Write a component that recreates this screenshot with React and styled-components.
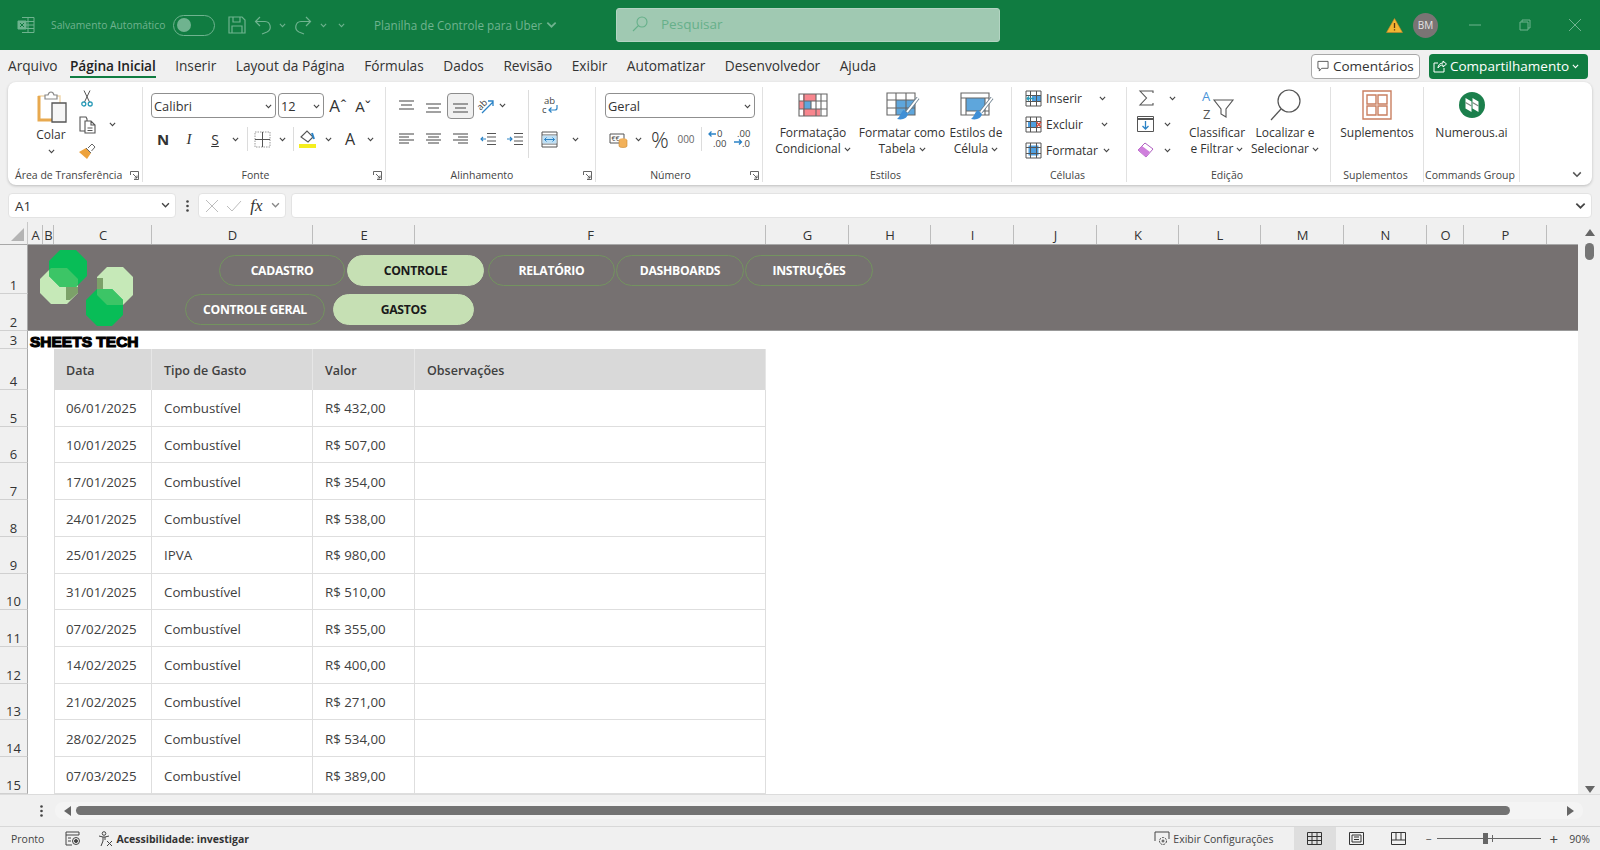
import React from 'react';
import styled, { createGlobalStyle } from 'styled-components';

const UI = '"Open Sans", "Noto Sans", sans-serif';

const Global = createGlobalStyle`
  html, body { margin: 0; padding: 0; height: 100%; overflow: hidden; background: #f0f0f0; }
  body { font-family: ${UI}; color: #333; }
  * { box-sizing: border-box; }
`;

const Page = styled.div`
  width: 1600px;
  height: 850px;
  display: flex;
  flex-direction: column;
  overflow: hidden;
  background: #f0f0f0;
`;

/* title bar */
const TitleBar = styled.header`
  height: 50px;
  flex: none;
  background: #107c41;
  display: flex;
  align-items: center;
  padding-left: 17px;
  color: #6fb38f;
`;
const AutoSave = styled.span`
  font-size: 10.3px;
  margin-left: 16px;
  width: 122px;
  white-space: nowrap;
`;
const Toggle = styled.span`
  width: 42px;
  height: 21px;
  border: 1.5px solid #6fb38f;
  border-radius: 11px;
  display: flex;
  align-items: center;
  padding-left: 3px;
  margin-right: 7px;
  &::before { content: ''; width: 14px; height: 14px; border-radius: 50%; background: #6fb38f; }
`;
const DocName = styled.span`
  font-size: 11.7px;
  margin-left: 22px;
  width: 172px;
  white-space: nowrap;
`;
const SearchBox = styled.div`
  width: 384px;
  height: 34px;
  margin-left: 59px;
  background: #a0c9b2;
  border: 1px solid #b3d4c2;
  border-radius: 3px;
  display: flex;
  align-items: center;
  gap: 13px;
  padding: 0 0 2px 15px;
  font-size: 13.5px;
  color: #66b08a;
`;
const TitleRight = styled.div`
  margin-left: auto;
  display: flex;
  align-items: center;
`;
const Avatar = styled.span`
  width: 25px;
  height: 25px;
  border-radius: 50%;
  background: #7a7474;
  color: #e4e4e4;
  font-size: 10px;
  display: flex;
  align-items: center;
  justify-content: center;
  margin: 0 12px 0 10px;
`;
const WinBtn = styled.span`
  width: 50px;
  display: flex;
  justify-content: center;
`;

/* tabs */
const TabRow = styled.nav`
  height: 32px;
  flex: none;
  display: flex;
  align-items: center;
  padding: 0 12px 0 8px;
  gap: 19.5px;
`;
const Tab = styled.span`
  font-size: 13.7px;
  height: 32px;
  line-height: 31px;
  white-space: nowrap;
  color: #333;
  position: relative;
  ${p => p.$active && `
    color: #222;
    font-weight: 600;
    letter-spacing: -0.1px;
    margin-left: -7px;
    &::after { content: ''; position: absolute; left: 0; right: 0; bottom: 4px; height: 2px; background: #107c41; }
  `}
`;
const TabActions = styled.div`
  margin-left: auto;
  display: flex;
  gap: 9px;
`;
const CommentBtn = styled.button`
  width: 109px;
  height: 25px;
  border: 1px solid #a8a8a8;
  border-radius: 4px;
  background: #fff;
  font: 13.5px ${UI};
  color: #333;
  display: flex;
  align-items: center;
  gap: 4px;
  padding: 0 0 0 5px;
`;
const ShareBtn = styled(CommentBtn)`
  width: 159px;
  border: 0;
  background: #107c41;
  color: #fff;
  white-space: nowrap;
  padding-left: 4px;
  gap: 3px;
`;

/* ribbon */
const Ribbon = styled.div`
  height: 103px;
  flex: none;
  margin: 0 8px;
  background: #fff;
  border-radius: 8px;
  box-shadow: 0 1px 3px rgba(0, 0, 0, 0.22);
  display: flex;
  padding: 5px 0 2px;
`;
const Group = styled.section`
  width: ${p => p.$w}px;
  flex: none;
  display: flex;
  flex-direction: column;
  border-right: 1px solid #e1e1e1;
  margin-bottom: 1px;
`;
const GroupBody = styled.div`
  flex: 1;
  display: flex;
  padding-left: ${p => p.$left || 0}px;
  min-height: 0;
`;
const GroupLabel = styled.div`
  height: 15px;
  display: grid;
  grid-template-columns: 1fr auto 1fr;
  align-items: center;
  font-size: 10.5px;
  line-height: 15px;
  color: #444;
  white-space: nowrap;
  padding: 1px 3px 0 0;
  & > span:first-child { grid-column: 2; margin-right: ${p => (p.$shift || 0) * 2}px; }
`;
const ClipLabel = styled(GroupLabel)`
  grid-template-columns: 1fr auto;
  padding-left: 7px;
  & > span:first-child { grid-column: 1; }
  & > span:last-child { grid-column: 2; }
`;
const Launcher = styled.span`
  grid-column: 3;
  justify-self: end;
  display: flex;
`;
const Stack = styled.div`
  display: flex;
  flex-direction: column;
  margin-top: ${p => p.$top || 0}px;
  gap: ${p => p.$gap || 0}px;
  width: ${p => (p.$w ? p.$w + 'px' : 'auto')};
  flex: none;
`;
const Row = styled.div`
  display: flex;
  align-items: center;
  height: ${p => p.$h || 26}px;
`;
const Slot = styled.span`
  width: ${p => p.$w}px;
  height: 100%;
  flex: none;
  display: flex;
  align-items: center;
  justify-content: center;
  color: ${p => p.$color || '#333'};
  font-size: ${p => p.$size || 13}px;
  font-weight: ${p => p.$weight || 400};
  font-style: ${p => (p.$italic ? 'italic' : 'normal')};
  font-family: ${p => (p.$serif ? '"Liberation Serif", serif' : 'inherit')};
  text-decoration: ${p => (p.$under ? 'underline' : 'none')};
`;
const ActiveSlot = styled(Slot)`
  height: 26px;
  background: #f0f0f0;
  border: 1px solid #8c8c8c;
  border-radius: 4px;
`;
const VRule = styled.span`
  width: 1px;
  height: ${p => p.$h}px;
  margin: ${p => p.$top || 0}px ${p => p.$gap || 0}px 0;
  background: #dcdcdc;
  flex: none;
`;
const Select = styled.div`
  width: ${p => p.$w}px;
  height: 25px;
  flex: none;
  background: #fff;
  border: 1px solid #8f8f8f;
  border-radius: 4px;
  display: flex;
  align-items: center;
  justify-content: space-between;
  padding: 1px 3px 0 2px;
  margin-right: 2px;
  font-size: 12.8px;
  color: #333;
`;
const BigBtn = styled.div`
  width: ${p => p.$w}px;
  flex: none;
  display: flex;
  flex-direction: column;
  align-items: center;
  padding-top: ${p => p.$top ?? 5}px;
  font-size: 12px;
  line-height: 16px;
  color: #333;
  white-space: nowrap;
`;
const BigIcon = styled.div`
  height: ${p => p.$h || 33}px;
  display: flex;
  align-items: flex-start;
`;
const CellAction = styled.span`
  display: flex;
  align-items: center;
  font-size: 12px;
  color: #333;
  width: 100%;
  padding-left: 13px;
  gap: 4px;
  & > svg:last-child { margin-left: auto; margin-right: ${p => p.$chev || 21}px; }
`;
const RibbonEnd = styled.div`
  flex: 1;
  display: flex;
  align-items: flex-end;
  justify-content: flex-end;
  padding: 0 10px 5px 0;
`;

/* formula bar */
const FormulaBar = styled.div`
  height: 25px;
  flex: none;
  margin: 8px 8px 0;
  display: flex;
  align-items: stretch;
`;
const Field = styled.div`
  background: #fff;
  border: 1px solid #e3e3e3;
  border-radius: 4px;
  display: flex;
  align-items: center;
  width: ${p => (p.$w ? p.$w + 'px' : 'auto')};
  flex: ${p => (p.$w ? 'none' : 1)};
  justify-content: space-between;
  padding: 0 5px 0 6px;
  margin-left: ${p => p.$gap || 0}px;
  font-size: 13.5px;
`;
const Dots = styled.span`
  width: 22px;
  display: flex;
  align-items: center;
  justify-content: center;
`;

/* sheet */
const SheetWrap = styled.div`
  height: 573px;
  flex: none;
  margin-top: 4px;
  display: flex;
  border-bottom: 1px solid #dcdcdc;
`;
const Sheet = styled.div`
  width: 1578px;
  flex: none;
  background: #fff;
  display: grid;
  grid-template-columns: 28px 15px 11px 98px 161px 102px 351px 83px 82px 83px 83px 82px 82px 83px 83px 37px 83px 1fr;
  grid-template-rows: 23px 49px 37px 18px 41px repeat(11, 36.73px);
  overflow: hidden;
`;
const Corner = styled.div`
  background: #f0f0f0;
  border-bottom: 1px solid #a8a8a8;
  border-right: 1px solid #c8c8c8;
  display: flex;
  align-items: flex-end;
  justify-content: flex-end;
  padding: 0 3px 3px 0;
`;
const ColHead = styled.div`
  background: #f0f0f0;
  border-bottom: 1px solid #a8a8a8;
  font-size: 13px;
  color: #333;
  display: flex;
  align-items: center;
  justify-content: center;
  padding-top: 3px;
  position: relative;
  &::after {
    content: '';
    position: absolute;
    right: 0;
    top: 3px;
    bottom: 0;
    width: 1px;
    background: ${p => (p.$end ? 'transparent' : '#bdbdbd')};
  }
`;
const RowHead = styled.div`
  background: #f0f0f0;
  grid-column: 1;
  border-right: 1px solid #a8a8a8;
  border-bottom: 1px solid #d0d0d0;
  font-size: 13px;
  color: #333;
  display: flex;
  align-items: flex-end;
  justify-content: center;
  line-height: 16px;
`;
const Banner = styled.div`
  grid-column: 2 / -1;
  grid-row: 2 / 4;
  background: #767171;
  display: flex;
  border-bottom: 1px solid #999;
  padding: 3px 0 0 10px;
`;
const PillArea = styled.div`
  display: flex;
  flex-direction: column;
  gap: 8px;
  padding-top: 7px;
  margin-left: 45px;
`;
const PillRow = styled.div`
  display: flex;
  gap: 1px;
  margin-left: ${p => p.$left || 0}px;
`;
const Pill = styled.div`
  width: ${p => p.$w}px;
  height: 31px;
  margin-right: ${p => p.$after || 0}px;
  border-radius: 16px;
  border: 1px solid ${p => (p.$active ? '#c6e0b4' : '#73935f')};
  background: ${p => (p.$active ? '#c6e0b4' : 'transparent')};
  color: ${p => (p.$active ? '#1a1a1a' : '#fff')};
  font-size: 12.2px;
  font-weight: 700;
  letter-spacing: -0.3px;
  display: flex;
  align-items: center;
  justify-content: center;
`;
const Brand = styled.div`
  grid-column: 2 / 8;
  grid-row: 4;
  padding-left: 2px;
  font-family: "Liberation Sans", sans-serif;
  font-size: 15.5px;
  line-height: 21px;
  font-weight: 700;
  color: #000;
  -webkit-text-stroke: 1.2px #000;
  white-space: nowrap;
`;
const Blank = styled.div`
  grid-column: 2 / 4;
`;
const Th = styled.div`
  background: #d9d9d9;
  border-right: 1px solid #e6e6e6;
  font-size: 12.5px;
  font-weight: 600;
  color: #404040;
  display: flex;
  align-items: center;
  padding: 1px 0 0 12px;
`;
const Td = styled.div`
  background: #fff;
  border-right: 1px solid #dedede;
  border-bottom: 1px solid #dedede;
  border-left: ${p => (p.$first ? '1px solid #dedede' : '0')};
  font-size: 13.3px;
  color: #404040;
  display: flex;
  align-items: center;
  padding: 1px 0 0 ${p => (p.$first ? 11 : 12)}px;
  white-space: nowrap;
`;
const VScroll = styled.div`
  flex: 1;
  display: flex;
  flex-direction: column;
  align-items: center;
  padding: 7px 0 1px 1px;
`;
const VThumb = styled.span`
  width: 9px;
  height: 17px;
  margin-top: 7px;
  background: #757575;
  border-radius: 5px;
`;

/* scroll row */
const HRow = styled.div`
  height: 32px;
  flex: none;
  display: flex;
  align-items: center;
  padding-left: 40px;
  border-bottom: 1px solid #d8d8d8;
`;
const HTrack = styled.div`
  margin-left: 12px;
  width: 1528px;
  height: 17px;
  border-radius: 8px;
  background: #f4f4f4;
  display: flex;
  align-items: center;
  padding: 0 9px;
  gap: 5px;
`;
const HThumb = styled.span`
  width: 1434px;
  height: 9px;
  border-radius: 5px;
  background: #737373;
`;

/* status bar */
const StatusBar = styled.footer`
  flex: 1;
  display: flex;
  align-items: center;
  font-size: 10.5px;
  color: #444;
  padding-left: 11px;
`;
const Strong = styled.strong`
  font-weight: 700;
  margin-left: 3px;
  color: #333;
`;
const StatusRight = styled.div`
  margin-left: auto;
  display: flex;
  align-items: center;
  height: 100%;
`;
const ViewBtn = styled.span`
  width: 42px;
  height: 100%;
  display: flex;
  align-items: center;
  justify-content: center;
  background: ${p => (p.$active ? '#dedede' : 'transparent')};
`;
const Zoom = styled.div`
  display: flex;
  align-items: center;
  margin-left: 6px;
  gap: 3px;
  width: 174.5px;
  font-size: 10.5px;
`;
const Slider = styled.span`
  width: 104px;
  height: 1px;
  background: #666;
  position: relative;
  margin: 0 6px 0 2px;
  &::before { content: ''; position: absolute; left: 46px; top: -5px; width: 5px; height: 11px; background: #666; }
  &::after { content: ''; position: absolute; left: 55px; top: -3px; width: 1px; height: 7px; background: #666; }
`;
const PlusSign = styled.span`
  font-size: 15px;
`;
const ZoomValue = styled.span`
  margin-left: auto;
  padding-right: 10px;
`;
const ConfigText = styled.span`
  margin: 0 20px 0 3px;
`;

const Ico = styled.svg`
  display: block;
  flex: none;
  overflow: visible;
  margin: ${p => p.$m || 0};
`;
const Flip = styled(Ico)`
  transform: scaleX(-1);
`;

const Chev = ({ c = '#444', w = 7 }) => (
  <Ico width={w} height={w * 0.7} viewBox="0 0 7 5" fill="none" stroke={c} strokeWidth="1.1"><path d="M.8 1l2.7 2.7L6.2 1" /></Ico>
);
const Launch = () => (
  <Ico width="9" height="9" viewBox="0 0 9 9" fill="none" stroke="#555" strokeWidth="0.9"><path d="M.5 4V.5h8v8H4M3 3l4 4M7 4.5V7H4.5" /></Ico>
);
const Lines = ({ rows, w = 17, h = 14 }) => (
  <Ico width={w} height={h} viewBox={`0 0 ${w} ${h}`} stroke="#555" strokeWidth="1.1">
    {rows.map((r, i) => <line key={i} x1={r[0]} x2={r[1]} y1={r[2]} y2={r[2]} />)}
  </Ico>
);
const Indent = ({ dir }) => (
  <Ico width="16" height="14" viewBox="0 0 16 14" fill="none" strokeWidth="1.1">
    <path d="M7 1.5h9M7 5h9M7 9h9M7 12.5h9" stroke="#555" />
    <path d={dir ? 'M0 7h5M3 5l2 2-2 2' : 'M6 7H1M3 5L1 7l2 2'} stroke="#2b83c6" />
  </Ico>
);
const DecIcon = ({ rev }) => (
  <Ico width="17" height="20" viewBox="0 0 17 20">
    <text x={rev ? 3 : 9} y="8" fontSize="9.5" fill="#444" fontFamily="Open Sans">{rev ? '.00' : '0'}</text>
    <text x={rev ? 8 : 5} y="18" fontSize="9.5" fill="#444" fontFamily="Open Sans">{rev ? '.0' : '.00'}</text>
    <path d={rev ? 'M0 13h7M5 10.5L7.5 13 5 15.5' : 'M8 5H1M3.5 2.5L1 5l2.5 2.5'} fill="none" stroke="#2b83c6" strokeWidth="1.3" />
  </Ico>
);

const ExcelIcon = () => (
  <Ico width="18" height="18" viewBox="0 0 18 18" fill="none" stroke="#6fb38f" strokeWidth="1">
    <path d="M5 1.5h12v15H5M11 1.5v15M5 5.5h12M5 9h12M5 12.5h12" />
    <path d="M1 5h8v8H1z" fill="#6fb38f" />
    <path d="M3 7l4 4M7 7l-4 4" stroke="#107c41" />
  </Ico>
);
const SaveIcon = () => (
  <Ico width="18" height="18" viewBox="0 0 18 18" fill="none" stroke="#6fb38f" strokeWidth="1.2"><path d="M1 1h13l3 3v13H1zM5 1v5h7V1M4 17v-7h10v7" /></Ico>
);
const undoPath = 'M6 1L1.5 5.5 6 10M1.5 5.5H11a5.5 5.5 0 0 1 2 10.5L8 18';
const UndoIcon = () => (
  <Ico width="18" height="19" viewBox="0 0 18 19" fill="none" stroke="#6fb38f" strokeWidth="1.2"><path d={undoPath} /></Ico>
);
const RedoIcon = () => (
  <Flip width="18" height="19" viewBox="0 0 18 19" fill="none" stroke="#6fb38f" strokeWidth="1.2"><path d={undoPath} /></Flip>
);
const SearchIcon = ({ c = '#66b08a', s = 16 }) => (
  <Ico width={s} height={s} viewBox="0 0 16 16" fill="none" stroke={c} strokeWidth="1.1"><circle cx="10" cy="6" r="5" /><path d="M6.5 9.5L1 15" /></Ico>
);
const WarnIcon = () => (
  <Ico width="17" height="15" viewBox="0 0 17 15"><path d="M8.5.5l8 14H.5z" fill="#f2b632" stroke="#c9822a" strokeWidth=".6" /><path d="M8.5 5v5M8.5 11.2v1.3" stroke="#5a3510" strokeWidth="1.3" /></Ico>
);
const PasteIcon = () => (
  <Ico width="31" height="33" viewBox="0 0 31 33" fill="none" $m="0 0 0 3px">
    <path d="M2 6h21v24H2z" fill="#fff" stroke="#f0d7ae" strokeWidth="1.5" />
    <path d="M2 6v24h21" stroke="#e8a94f" strokeWidth="3" />
    <path d="M8 9V5h3c1-4 5-4 6 0h3v4z" fill="#fff" stroke="#8a8a8a" strokeWidth="1.2" />
    <path d="M15 13h14v19H15z" fill="#f6f6f6" stroke="#555" strokeWidth="1.3" />
  </Ico>
);
const CutIcon = () => (
  <Ico width="12" height="17" viewBox="0 0 12 17" fill="none" stroke="#555" strokeWidth="1"><path d="M3 .5l5.5 11.5M9 .5L3.5 12" /><circle cx="2.8" cy="14" r="2" stroke="#2b9bb8" strokeWidth="1.3" /><circle cx="9.2" cy="14" r="2" stroke="#2b9bb8" strokeWidth="1.3" /></Ico>
);
const CopyIcon = () => (
  <Ico width="17" height="18" viewBox="0 0 17 18" fill="none" stroke="#555" strokeWidth="1.1"><path d="M1 1h6l1 2v12H1z" /><path d="M6 5h6l4 4v8H6zM12 5v4h4M8.5 12h5M8.5 14.5h5" fill="#fff" /></Ico>
);
const BrushIcon = () => (
  <Ico width="17" height="16" viewBox="0 0 17 16" fill="none"><path d="M0 9l7-4 5 5-4 6z" fill="#eda23c" /><path d="M7 5l5 5M9 5l4-4 3 3-3.5 4" stroke="#666" strokeWidth="1" /></Ico>
);
const BorderIcon = () => (
  <Ico width="17" height="17" viewBox="0 0 17 17" fill="none" stroke="#9a9a9a" strokeWidth="1" strokeDasharray="1.5 1"><path d="M1 1h15v15H1z" /><path d="M8.5 1v15M1 8.5h15" stroke="#555" strokeDasharray="0" /></Ico>
);
const FillIcon = () => (
  <Ico width="18" height="20" viewBox="0 0 18 20" fill="none"><path d="M2 8l6-6 6 6-5 5z" stroke="#555" strokeWidth="1.1" /><path d="M13 4l2 6" stroke="#2b83c6" strokeWidth="2" /><rect x="0" y="15" width="17" height="4" fill="#f5ee1e" /></Ico>
);
const OrientIcon = () => (
  <Ico width="18" height="18" viewBox="0 0 18 18" fill="none"><text x="0" y="11" fontSize="9" fill="#444" fontFamily="Open Sans" transform="rotate(-45 5 8)">ab</text><path d="M5 16L16 5M11 4h5v5" stroke="#2b83c6" strokeWidth="1.3" /></Ico>
);
const WrapIcon = () => (
  <Ico width="16" height="19" viewBox="0 0 16 19" fill="none"><text x="2" y="8" fontSize="9.5" fill="#444" fontFamily="Open Sans">ab</text><text x="0" y="17" fontSize="9.5" fill="#444" fontFamily="Open Sans">c</text><path d="M15 9v3a2 2 0 0 1-2 2H7M9.5 11.5L7 14l2.5 2.5" stroke="#2b83c6" strokeWidth="1.2" /></Ico>
);
const MergeIcon = () => (
  <Ico width="17" height="17" viewBox="0 0 17 17" fill="none" stroke="#555" strokeWidth="1"><path d="M1 1h15v15H1zM1 4h15M1 13h15" /><rect x="1.5" y="4.5" width="14" height="8" fill="#bfe0f5" stroke="none" /><path d="M3.5 8.5h10M5.5 6.5l-2 2 2 2M11.5 6.5l2 2-2 2" stroke="#2b83c6" /></Ico>
);
const CurrencyIcon = () => (
  <Ico width="19" height="17" viewBox="0 0 19 17" fill="none"><path d="M1 3h14v9H1z" stroke="#555" /><text x="2.5" y="10" fontSize="7" fill="#444" fontFamily="Open Sans">€€</text><ellipse cx="14" cy="9" rx="4" ry="1.8" fill="#f2b15a" /><path d="M10 9v6c0 2 8 2 8 0V9" fill="#f2b15a" stroke="#c8862f" strokeWidth=".6" /></Ico>
);
const CondIcon = () => (
  <Ico width="30" height="24" viewBox="0 0 30 24" fill="none">
    <path d="M5 1h13v7H5zM5 16h17v7H5zM1 8h5v8H1z" fill="#f8868e" />
    <path d="M6 8h7v8H6z" fill="#5ea6dc" />
    <path d="M1 1h28v22H1zM6 1v22M13 8v8M18 1v22M23 1v22M1 8h28M1 16h28" stroke="#666" strokeWidth="1.1" />
  </Ico>
);
const BrushOver = () => (
  <>
    <path d="M32 6L21 20" stroke="#6a7d8c" strokeWidth="3.6" />
    <path d="M32 6L21 20" stroke="#fff" strokeWidth="2" />
    <path d="M18 18c-3 1-3 6-7 9 6 1.5 10-1 11-5z" fill="#3f8fd6" />
  </>
);
const TableStyleIcon = () => (
  <Ico width="32" height="29" viewBox="0 0 32 29" fill="none">
    <path d="M10 8h19v15H10z" fill="#5ea6dc" />
    <path d="M1 1h28v22H1zM10 1v22M20 1v22M1 8h28M1 16h28" stroke="#666" strokeWidth="1.1" />
    <BrushOver />
  </Ico>
);
const CellStyleIcon = () => (
  <Ico width="32" height="29" viewBox="0 0 32 29" fill="none">
    <path d="M6 6h19v13H6z" fill="#5ea6dc" />
    <path d="M1 1h28v22H1zM6 6v17M25 6v17M1 6h28M6 19h23" stroke="#666" strokeWidth="1.1" />
    <BrushOver />
  </Ico>
);
const CellIcon = ({ kind }) => (
  <Ico width="17" height="17" viewBox="0 0 17 17" fill="none" stroke="#555" strokeWidth="1">
    {kind === 'format' && <rect x="3.5" y="3.5" width="10" height="10" fill="#4f9fe0" stroke="none" />}
    {kind === 'insert' && <rect x="7" y="5" width="9" height="7" fill="#4f9fe0" stroke="none" />}
    {kind === 'delete' && <rect x="3" y="6" width="8" height="6" fill="#4f9fe0" stroke="none" />}
    <path d="M1 1h15v15H1zM1 5.5h15M1 11.5h15M5.5 1v15M11.5 1v15" />
    {kind === 'insert' && <path d="M9 8.5H2M4 6.5l-2 2 2 2" stroke="#2b9bb8" strokeWidth="1.3" />}
    {kind === 'delete' && <path d="M11.5 6l4.5 5M16 6l-4.5 5" stroke="#d34a3c" strokeWidth="1.3" />}
  </Ico>
);
const SigmaIcon = () => (
  <Ico width="15" height="16" viewBox="0 0 15 16" fill="none" stroke="#555" strokeWidth="1.1"><path d="M14 3V1H1l6.5 7L1 15h13v-2" /></Ico>
);
const FillDownIcon = () => (
  <Ico width="17" height="16" viewBox="0 0 17 16" fill="none"><path d="M.5.5h16v15H.5z" stroke="#555" /><path d="M.5 3h16" stroke="#555" strokeWidth="2" /><path d="M8.5 5v8M5.5 10l3 3 3-3" stroke="#2b83c6" strokeWidth="1.3" /></Ico>
);
const EraserIcon = () => (
  <Ico width="17" height="16" viewBox="0 0 17 16"><path d="M1 8l7-7 8 6-7 8z" fill="#fff" stroke="#b060c0" /><path d="M1 8l4-4 8 6-4 5z" fill="#cf7fdc" /></Ico>
);
const SortIcon = () => (
  <Ico width="33" height="30" viewBox="0 0 33 30" fill="none">
    <text x="1" y="12" fontSize="13" fill="#4a94d8" fontFamily="Open Sans">A</text>
    <text x="2" y="30" fontSize="13" fill="#555" fontFamily="Open Sans">Z</text>
    <path d="M13 11h19l-7 9v8l-5-3v-5z" stroke="#555" strokeWidth="1.1" />
  </Ico>
);
const BigSearch = () => (
  <Ico width="31" height="32" viewBox="0 0 31 32" fill="none" stroke="#555" strokeWidth="1.2"><circle cx="19" cy="12" r="11" /><path d="M11 20L1 31" /></Ico>
);
const AddinIcon = () => (
  <Ico width="30" height="30" viewBox="0 0 30 30" fill="none" stroke="#c97f60" strokeWidth="1.4"><path d="M1 1h28v28H1z" /><path d="M5 5h9v9H5zM16 5h9v9h-9zM5 16h9v9H5zM16 16h9v9h-9z" /></Ico>
);
const NumerousIcon = () => (
  <Ico width="26" height="26" viewBox="0 0 26 26">
    <circle cx="13" cy="13" r="13" fill="#1b7f4c" />
    <path d="M6.5 6l6 3.5V20l-6-3.5zM13.5 6l6 3.5V20l-6-3.5z" fill="#fff" />
    <path d="M6.5 10.5l6 3.5M13.5 10.5l6 3.5" stroke="#7b8a80" strokeWidth="1.2" />
  </Ico>
);
const CommentIcon = () => (
  <Ico width="12" height="12" viewBox="0 0 13 13" fill="none" stroke="#555"><path d="M1 1.5h11V9H5L2.5 12V9H1z" /></Ico>
);
const ShareIcon = () => (
  <Ico width="14" height="13" viewBox="0 0 14 13" fill="none" stroke="#fff"><path d="M5 3H1v9h10V8M5 8c0-3 2-5 5-5V1l3.5 3L10 7V5C8 5 6 6 5 8z" /></Ico>
);
const KebabIcon = () => (
  <Ico width="3" height="12" viewBox="0 0 3 12" fill="#444"><circle cx="1.5" cy="1.5" r="1.3" /><circle cx="1.5" cy="6" r="1.3" /><circle cx="1.5" cy="10.5" r="1.3" /></Ico>
);
const OctLogo = () => (
  <Ico width="102" height="80" viewBox="0 0 102 80">
    <polygon points="13,20 29,20 40,31 40,45 29,56 13,56 2,45 2,31" fill="#c6e9b8" />
    <polygon points="69,19 85,19 95,29 95,47 85,57 69,57 59,47 59,29" fill="#c6e9b8" />
    <polygon points="22,2 38,2 49,13 49,28 38,39 22,39 11,28 11,13" fill="#08bd57" />
    <polygon points="13,20 29,20 40,31 40,36 38,39 22,39 11,28 11,22" fill="#3cc566" />
    <polygon points="28,39 40,39 40,45 32,52 28,52" fill="#7ca169" />
    <polygon points="59,41 74,41 85,52 85,67 74,78 59,78 48,67 48,52" fill="#08bd57" />
    <polygon points="59,41 74,41 85,52 85,57 69,57 59,47" fill="#3cc566" />
    <polygon points="59,30 65,30 65,41 59,41" fill="#7ca169" />
  </Ico>
);

const navTop = [
  ['CADASTRO', 126, false, 1], ['CONTROLE', 137, true, 3], ['RELATÓRIO', 127, false, 0],
  ['DASHBOARDS', 128, false, 0], ['INSTRUÇÕES', 128, false, 0],
];
const navBottom = [['CONTROLE GERAL', 140, false, 7], ['GASTOS', 141, true, 0]];
const cols = ['A', 'B', 'C', 'D', 'E', 'F', 'G', 'H', 'I', 'J', 'K', 'L', 'M', 'N', 'O', 'P'];
const tabs = ['Arquivo', 'Página Inicial', 'Inserir', 'Layout da Página', 'Fórmulas', 'Dados', 'Revisão', 'Exibir', 'Automatizar', 'Desenvolvedor', 'Ajuda'];
const gastos = [
  ['06/01/2025', 'Combustível', 'R$ 432,00'],
  ['10/01/2025', 'Combustível', 'R$ 507,00'],
  ['17/01/2025', 'Combustível', 'R$ 354,00'],
  ['24/01/2025', 'Combustível', 'R$ 538,00'],
  ['25/01/2025', 'IPVA', 'R$ 980,00'],
  ['31/01/2025', 'Combustível', 'R$ 510,00'],
  ['07/02/2025', 'Combustível', 'R$ 355,00'],
  ['14/02/2025', 'Combustível', 'R$ 400,00'],
  ['21/02/2025', 'Combustível', 'R$ 271,00'],
  ['28/02/2025', 'Combustível', 'R$ 534,00'],
  ['07/03/2025', 'Combustível', 'R$ 389,00'],
];

const TitleArea = () => (
  <TitleBar>
    <ExcelIcon />
    <AutoSave>Salvamento Automático</AutoSave>
    <Toggle />
    <Slot $w={30}><SaveIcon /></Slot>
    <Slot $w={22}><UndoIcon /></Slot>
    <Slot $w={16}><Chev c="#6fb38f" /></Slot>
    <Slot $w={26}><RedoIcon /></Slot>
    <Slot $w={14}><Chev c="#6fb38f" /></Slot>
    <Slot $w={22}><Chev c="#6fb38f" /></Slot>
    <DocName>Planilha de Controle para Uber</DocName>
    <Chev c="#6fb38f" w={11} />
    <SearchBox><SearchIcon />Pesquisar</SearchBox>
    <TitleRight>
      <WarnIcon />
      <Avatar>BM</Avatar>
      <WinBtn><Ico width="12" height="2" viewBox="0 0 12 2"><path d="M0 1h12" stroke="#6fb38f" /></Ico></WinBtn>
      <WinBtn><Ico width="12" height="12" viewBox="0 0 12 12" fill="none" stroke="#6fb38f"><path d="M1 3h8v8H1zM3 3V1h8v8H9" /></Ico></WinBtn>
      <WinBtn><Ico width="12" height="12" viewBox="0 0 12 12" stroke="#6fb38f"><path d="M0 0l12 12M12 0L0 12" /></Ico></WinBtn>
    </TitleRight>
  </TitleBar>
);

const RibbonArea = () => (
  <Ribbon>
    <Group $w={135}>
      <GroupBody $left={16}>
        <BigBtn $w={54} $top={3}>
          <BigIcon $h={37}><PasteIcon /></BigIcon>
          <span>Colar</span>
          <Row $h={16}><Chev /></Row>
        </BigBtn>
        <Stack $w={50} $gap={1}>
          <Row $h={23}><Slot $w={18}><CutIcon /></Slot></Row>
          <Row $h={27}><Slot $w={18}><CopyIcon /></Slot><Slot $w={32}><Chev /></Slot></Row>
          <Row $h={24}><Slot $w={18}><BrushIcon /></Slot></Row>
        </Stack>
      </GroupBody>
      <ClipLabel>
        <span>Área de Transferência</span>
        <Launcher><Launch /></Launcher>
      </ClipLabel>
    </Group>

    <Group $w={243}>
      <GroupBody $left={8}>
        <Stack $top={6} $gap={8}>
          <Row $h={25}>
            <Select $w={125}>Calibri<Chev /></Select>
            <Select $w={46}>12<Chev /></Select>
            <Slot $w={24} $size={17}>Aˆ</Slot>
            <Slot $w={26} $size={15}>Aˇ</Slot>
          </Row>
          <Row>
            <Slot $w={24} $weight={700} $size={15}>N</Slot>
            <Slot $w={28} $italic $serif $size={15}>I</Slot>
            <Slot $w={24} $under $size={14}>S</Slot>
            <Slot $w={16}><Chev /></Slot>
            <VRule $h={24} $gap={4} />
            <Slot $w={21}><BorderIcon /></Slot>
            <Slot $w={18}><Chev /></Slot>
            <VRule $h={24} $gap={2} />
            <Slot $w={24}><FillIcon /></Slot>
            <Slot $w={16}><Chev /></Slot>
            <Slot $w={28} $size={16}>A</Slot>
            <Slot $w={12}><Chev /></Slot>
          </Row>
        </Stack>
      </GroupBody>
      <GroupLabel $shift={7}><span>Fonte</span><Launcher><Launch /></Launcher></GroupLabel>
    </Group>

    <Group $w={210}>
      <GroupBody $left={6}>
        <Stack $top={6} $gap={8} $w={136}>
          <Row $h={25}>
            <Slot $w={28}><Lines rows={[[1, 16, 2], [3, 14, 6], [1, 16, 10]]} /></Slot>
            <Slot $w={27}><Lines rows={[[1, 16, 5], [3, 14, 9], [1, 16, 13]]} /></Slot>
            <ActiveSlot $w={27}><Lines rows={[[1, 16, 5], [3, 14, 9], [1, 16, 13]]} /></ActiveSlot>
            <Slot $w={23}><OrientIcon /></Slot>
            <Slot $w={10}><Chev /></Slot>
          </Row>
          <Row>
            <Slot $w={28}><Lines rows={[[1, 16, 2], [1, 11, 5], [1, 16, 8], [1, 11, 11]]} /></Slot>
            <Slot $w={27}><Lines rows={[[1, 16, 2], [3, 14, 5], [1, 16, 8], [3, 14, 11]]} /></Slot>
            <Slot $w={27}><Lines rows={[[1, 16, 2], [6, 16, 5], [1, 16, 8], [6, 16, 11]]} /></Slot>
            <Slot $w={27}><Indent /></Slot>
            <Slot $w={27}><Indent dir /></Slot>
          </Row>
        </Stack>
        <VRule $h={68} $top={3} />
        <Stack $top={6} $gap={8}>
          <Row $h={25}><Slot $w={42}><WrapIcon /></Slot></Row>
          <Row><Slot $w={41}><MergeIcon /></Slot><Slot $w={10}><Chev /></Slot></Row>
        </Stack>
      </GroupBody>
      <GroupLabel $shift={7}><span>Alinhamento</span><Launcher><Launch /></Launcher></GroupLabel>
    </Group>

    <Group $w={167}>
      <GroupBody $left={9}>
        <Stack $top={6} $gap={8}>
          <Row $h={25}><Select $w={150}>Geral<Chev /></Select></Row>
          <Row>
            <Slot $w={26}><CurrencyIcon /></Slot>
            <Slot $w={14}><Chev /></Slot>
            <Slot $w={30} $size={22} $weight={300}>%</Slot>
            <Slot $w={22} $size={10} $color="#666">000</Slot>
            <VRule $h={24} $gap={3.5} />
            <Slot $w={22}><DecIcon /></Slot>
            <Slot $w={30}><DecIcon rev /></Slot>
          </Row>
        </Stack>
      </GroupBody>
      <GroupLabel $shift={7}><span>Número</span><Launcher><Launch /></Launcher></GroupLabel>
    </Group>

    <Group $w={249}>
      <GroupBody>
        <BigBtn $w={100} $top={6}>
          <BigIcon $h={32}><CondIcon /></BigIcon>
          <span>Formatação</span>
          <Row $h={16}>Condicional&nbsp;<Chev /></Row>
        </BigBtn>
        <BigBtn $w={78} $top={5}>
          <BigIcon $h={33}><TableStyleIcon /></BigIcon>
          <span>Formatar como</span>
          <Row $h={16}>Tabela&nbsp;<Chev /></Row>
        </BigBtn>
        <BigBtn $w={70} $top={5}>
          <BigIcon $h={33}><CellStyleIcon /></BigIcon>
          <span>Estilos de</span>
          <Row $h={16}>Célula&nbsp;<Chev /></Row>
        </BigBtn>
      </GroupBody>
      <GroupLabel><span>Estilos</span></GroupLabel>
    </Group>

    <Group $w={115}>
      <GroupBody>
        <Stack $top={-2} $w={114}>
          <Row><CellAction $chev={20}><CellIcon kind="insert" />Inserir<Chev /></CellAction></Row>
          <Row><CellAction $chev={18}><CellIcon kind="delete" />Excluir<Chev /></CellAction></Row>
          <Row><CellAction $chev={16}><CellIcon kind="format" />Formatar<Chev /></CellAction></Row>
        </Stack>
      </GroupBody>
      <GroupLabel><span>Células</span></GroupLabel>
    </Group>

    <Group $w={204}>
      <GroupBody>
        <Stack $top={-2} $w={56}>
          <Row><Slot $w={38}><SigmaIcon /></Slot><Slot $w={14}><Chev /></Slot></Row>
          <Row><Slot $w={37}><FillDownIcon /></Slot><Slot $w={6}><Chev /></Slot></Row>
          <Row><Slot $w={37}><EraserIcon /></Slot><Slot $w={6}><Chev /></Slot></Row>
        </Stack>
        <BigBtn $w={68} $top={2}>
          <BigIcon $h={36}><SortIcon /></BigIcon>
          <span>Classificar</span>
          <Row $h={16}>e Filtrar&nbsp;<Chev /></Row>
        </BigBtn>
        <BigBtn $w={68} $top={2}>
          <BigIcon $h={36}><BigSearch /></BigIcon>
          <span>Localizar e</span>
          <Row $h={16}>Selecionar&nbsp;<Chev /></Row>
        </BigBtn>
      </GroupBody>
      <GroupLabel><span>Edição</span></GroupLabel>
    </Group>

    <Group $w={93}>
      <GroupBody>
        <BigBtn $w={92} $top={3}>
          <BigIcon $h={35}><AddinIcon /></BigIcon>
          <span>Suplementos</span>
        </BigBtn>
      </GroupBody>
      <GroupLabel><span>Suplementos</span></GroupLabel>
    </Group>

    <Group $w={96}>
      <GroupBody>
        <BigBtn $w={95}>
          <BigIcon><NumerousIcon /></BigIcon>
          <span>Numerous.ai</span>
        </BigBtn>
      </GroupBody>
      <GroupLabel><span>Commands Group</span></GroupLabel>
    </Group>

    <RibbonEnd><Chev c="#555" w={10} /></RibbonEnd>
  </Ribbon>
);

const SheetArea = () => (
  <SheetWrap>
    <Sheet>
      <Corner><Ico width="13" height="13" viewBox="0 0 13 13"><path d="M13 0v13H0z" fill="#b4b4b4" /></Ico></Corner>
      {cols.map(c => <ColHead key={c}>{c}</ColHead>)}
      <ColHead $end />
      <RowHead>1</RowHead>
      <Banner>
        <OctLogo />
        <PillArea>
          <PillRow $left={34}>
            {navTop.map(([t, w, a, after]) => <Pill key={t} $w={w} $active={a} $after={after}>{t}</Pill>)}
          </PillRow>
          <PillRow>
            {navBottom.map(([t, w, a, after]) => <Pill key={t} $w={w} $active={a} $after={after}>{t}</Pill>)}
          </PillRow>
        </PillArea>
      </Banner>
      <RowHead>2</RowHead>
      <RowHead>3</RowHead>
      <Brand>SHEETS TECH</Brand>
      <RowHead>4</RowHead>
      <Blank />
      <Th>Data</Th>
      <Th>Tipo de Gasto</Th>
      <Th>Valor</Th>
      <Th>Observações</Th>
      {gastos.map((g, i) => (
        <React.Fragment key={g[0]}>
          <RowHead>{i + 5}</RowHead>
          <Blank />
          <Td $first>{g[0]}</Td>
          <Td>{g[1]}</Td>
          <Td>{g[2]}</Td>
          <Td />
        </React.Fragment>
      ))}
    </Sheet>
    <VScroll>
      <Ico width="10" height="7" viewBox="0 0 10 7"><path d="M5 0l5 7H0z" fill="#666" /></Ico>
      <VThumb />
      <Ico width="10" height="7" viewBox="0 0 10 7" $m="auto 0 0"><path d="M5 7l5-7H0z" fill="#666" /></Ico>
    </VScroll>
  </SheetWrap>
);

export default function App() {
  return (
    <Page>
      <Global />
      <TitleArea />
      <TabRow>
        {tabs.map(t => <Tab key={t} $active={t === 'Página Inicial'}>{t}</Tab>)}
        <TabActions>
          <CommentBtn><CommentIcon />Comentários</CommentBtn>
          <ShareBtn><ShareIcon />Compartilhamento <Chev c="#fff" /></ShareBtn>
        </TabActions>
      </TabRow>
      <RibbonArea />
      <FormulaBar>
        <Field $w={168}>A1<Chev c="#444" w={9} /></Field>
        <Dots><KebabIcon /></Dots>
        <Field $w={88}>
          <Ico width="14" height="14" viewBox="0 0 14 14" stroke="#bdbdbd"><path d="M1 1l12 12M13 1L1 13" /></Ico>
          <Ico width="16" height="12" viewBox="0 0 16 12" fill="none" stroke="#bdbdbd"><path d="M1 6l5 5L15 1" /></Ico>
          <Slot $w={16} $size={17} $italic $serif>fx</Slot>
          <Chev c="#888" w={9} />
        </Field>
        <Field $gap={5}><span /><Chev c="#444" w={11} /></Field>
      </FormulaBar>
      <SheetArea />
      <HRow>
        <KebabIcon />
        <HTrack>
          <Ico width="7" height="10" viewBox="0 0 7 10"><path d="M0 5l7-5v10z" fill="#666" /></Ico>
          <HThumb />
          <Ico width="7" height="10" viewBox="0 0 7 10" $m="0 0 0 auto"><path d="M7 5L0 0v10z" fill="#666" /></Ico>
        </HTrack>
      </HRow>
      <StatusBar>
        Pronto
        <Ico width="16" height="15" viewBox="0 0 16 15" fill="none" stroke="#444" $m="0 17px 0 21px"><path d="M1 1h13v3H1zM1 4v10h6M3 7h3M3 10h3" /><circle cx="11" cy="10" r="3.5" /><circle cx="11" cy="10" r="1.5" fill="#444" /></Ico>
        <Ico width="15" height="16" viewBox="0 0 15 16" fill="none" stroke="#444"><circle cx="6" cy="2.5" r="1.8" /><path d="M1 5l4 1h2l4-1M5 6v4l-2 5M7 6v3M9 10l5 5M14 10l-5 5" /></Ico>
        <Strong>Acessibilidade: investigar</Strong>
        <StatusRight>
          <Ico width="16" height="15" viewBox="0 0 16 15" fill="none" stroke="#444"><path d="M1 10V1h14v7" /><circle cx="9" cy="10" r="3.5" strokeDasharray="2 1" /><circle cx="9" cy="10" r="1" /></Ico>
          <ConfigText>Exibir Configurações</ConfigText>
          <ViewBtn $active><Ico width="15" height="13" viewBox="0 0 15 13" fill="none" stroke="#333"><path d="M.5.5h14v12H.5zM5 .5v12M10 .5v12M.5 4.5h14M.5 8.5h14" /></Ico></ViewBtn>
          <ViewBtn><Ico width="15" height="13" viewBox="0 0 15 13" fill="none" stroke="#333"><path d="M.5.5h14v12H.5zM3 3h9v7H3zM5 5h5M5 7.5h5" /></Ico></ViewBtn>
          <ViewBtn><Ico width="15" height="13" viewBox="0 0 15 13" fill="none" stroke="#333"><path d="M.5.5h14v12H.5zM.5 8h14M5 .5V8M10 .5V8" /></Ico></ViewBtn>
          <Zoom>
            <span>−</span><Slider /><PlusSign>+</PlusSign>
            <ZoomValue>90%</ZoomValue>
          </Zoom>
        </StatusRight>
      </StatusBar>
    </Page>
  );
}
